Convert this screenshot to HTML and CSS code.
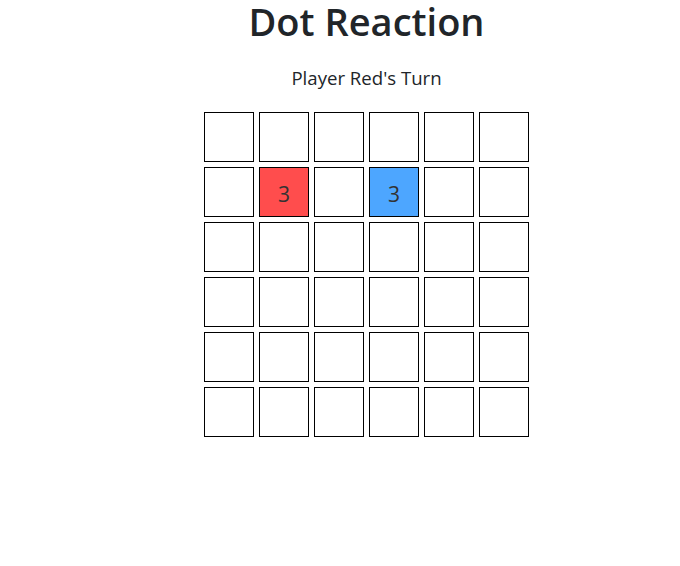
FILE: index.html
```html
<!DOCTYPE html>
<html>
<head>
<meta charset="utf-8">
<title>Dot Reaction</title>
<link rel="stylesheet" href="styles.css">
</head>
<body>
<main class="app">
  <h1 class="title">Dot Reaction</h1>
  <p class="status">Player Red's Turn</p>
  <div class="board">
    <div class="cell"></div><div class="cell"></div><div class="cell"></div><div class="cell"></div><div class="cell"></div><div class="cell"></div>
    <div class="cell"></div><div class="cell red">3</div><div class="cell"></div><div class="cell blue">3</div><div class="cell"></div><div class="cell"></div>
    <div class="cell"></div><div class="cell"></div><div class="cell"></div><div class="cell"></div><div class="cell"></div><div class="cell"></div>
    <div class="cell"></div><div class="cell"></div><div class="cell"></div><div class="cell"></div><div class="cell"></div><div class="cell"></div>
    <div class="cell"></div><div class="cell"></div><div class="cell"></div><div class="cell"></div><div class="cell"></div><div class="cell"></div>
    <div class="cell"></div><div class="cell"></div><div class="cell"></div><div class="cell"></div><div class="cell"></div><div class="cell"></div>
  </div>
</main>
</body>
</html>
```
FILE: styles.css
```css
html, body {
  margin: 0;
  padding: 0;
  background: #fff;
}
body {
  font-family: "Open Sans", "Noto Sans", sans-serif;
  color: #212529;
}
.app {
  display: flex;
  flex-direction: column;
  align-items: center;
  padding-left: 53px;
}
.title {
  margin: 0;
  font-size: 38px;
  font-weight: 600;
  line-height: 42px;
}
.status {
  margin: 21px 0 0;
  font-size: 18.6px;
  line-height: 30px;
}
.board {
  margin-top: 19px;
  display: grid;
  grid-template-columns: repeat(6, 50px);
  grid-auto-rows: 50px;
  gap: 5px;
}
.cell {
  box-sizing: border-box;
  border: 1px solid #000;
  display: flex;
  align-items: center;
  justify-content: center;
  padding-top: 3px;
  font-size: 21px;
  color: #333;
  background: #fff;
}
.cell.red {
  background: #ff4d4d;
}
.cell.blue {
  background: #4da6ff;
}
```
